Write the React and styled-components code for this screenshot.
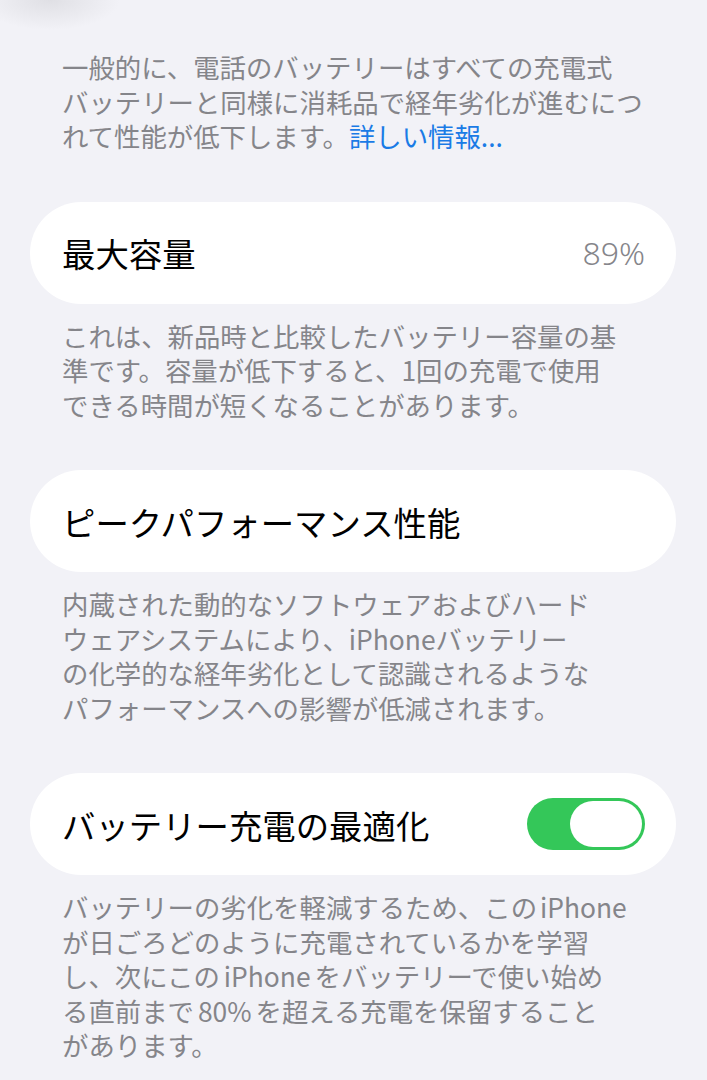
import styled, { createGlobalStyle } from "styled-components";

const GlobalStyle = createGlobalStyle`
  html, body {
    margin: 0;
    padding: 0;
    background: #f2f2f7;
  }
  body {
    font-family: "Noto Sans CJK JP", "Noto Sans", sans-serif;
    -webkit-font-smoothing: antialiased;
  }
`;

const Page = styled.div`
  min-height: 1080px;
  box-sizing: border-box;
  padding: 50px 31px 0 30px;
  background:
    radial-gradient(ellipse 70px 30px at 50px 0px, rgba(205, 205, 210, 0.5), rgba(242, 242, 247, 0) 100%),
    #f2f2f7;
  display: flex;
  flex-direction: column;
`;

const Note = styled.p`
  margin: ${(p) => (p.$first ? "0" : "15px")} 0 0;
  padding: 0 0 0 32px;
  font-size: 26.4px;
  line-height: 34.5px;
  color: #85858a;
  white-space: nowrap;
`;

const Latin = styled.span`
  margin: 0 ${(p) => p.$gap || 5}px;
`;

const Link = styled.span`
  color: #1a7be6;
`;

const Card = styled.div`
  margin-top: 48px;
  height: 102px;
  box-sizing: border-box;
  background: #ffffff;
  border-radius: 51px;
  padding: 0 31px 0 32px;
  display: flex;
  align-items: center;
  justify-content: space-between;
`;

const Title = styled.span`
  font-size: 33.4px;
  color: #000000;
  white-space: nowrap;
`;

const Value = styled.span`
  font-family: "Noto Sans", "Noto Sans CJK JP", sans-serif;
  font-size: 32px;
  font-weight: 300;
  color: #85858a;
`;

const Toggle = styled.div`
  width: 118px;
  height: 52px;
  border-radius: 26px;
  background: #34c759;
  display: flex;
  align-items: center;
  justify-content: ${(p) => (p.$on ? "flex-end" : "flex-start")};
  padding: 0 3px;
  box-sizing: border-box;
`;

const Knob = styled.div`
  width: 72px;
  height: 46px;
  border-radius: 23px;
  background: #ffffff;
`;

export default function App() {
  return (
    <>
      <GlobalStyle />
      <Page>
        <Note $first>
          一般的に、電話のバッテリーはすべての充電式
          <br />
          バッテリーと同様に消耗品で経年劣化が進むにつ
          <br />
          れて性能が低下します。<Link>詳しい情報...</Link>
        </Note>

        <Card>
          <Title>最大容量</Title>
          <Value>89%</Value>
        </Card>
        <Note>
          これは、新品時と比較したバッテリー容量の基
          <br />
          準です。容量が低下すると、1回の充電で使用
          <br />
          できる時間が短くなることがあります。
        </Note>

        <Card>
          <Title>ピークパフォーマンス性能</Title>
        </Card>
        <Note>
          内蔵された動的なソフトウェアおよびハード
          <br />
          ウェアシステムにより、iPhoneバッテリー
          <br />
          の化学的な経年劣化として認識されるような
          <br />
          パフォーマンスへの影響が低減されます。
        </Note>

        <Card>
          <Title>バッテリー充電の最適化</Title>
          <Toggle $on>
            <Knob />
          </Toggle>
        </Card>
        <Note>
          バッテリーの劣化を軽減するため、この<Latin $gap={3}>iPhone</Latin>
          <br />
          が日ごろどのように充電されているかを学習
          <br />
          し、次にこの<Latin $gap={4}>iPhone</Latin>をバッテリーで使い始め
          <br />
          る直前まで<Latin $gap={4}>80%</Latin>を超える充電を保留すること
          <br />
          があります。
        </Note>
      </Page>
    </>
  );
}
